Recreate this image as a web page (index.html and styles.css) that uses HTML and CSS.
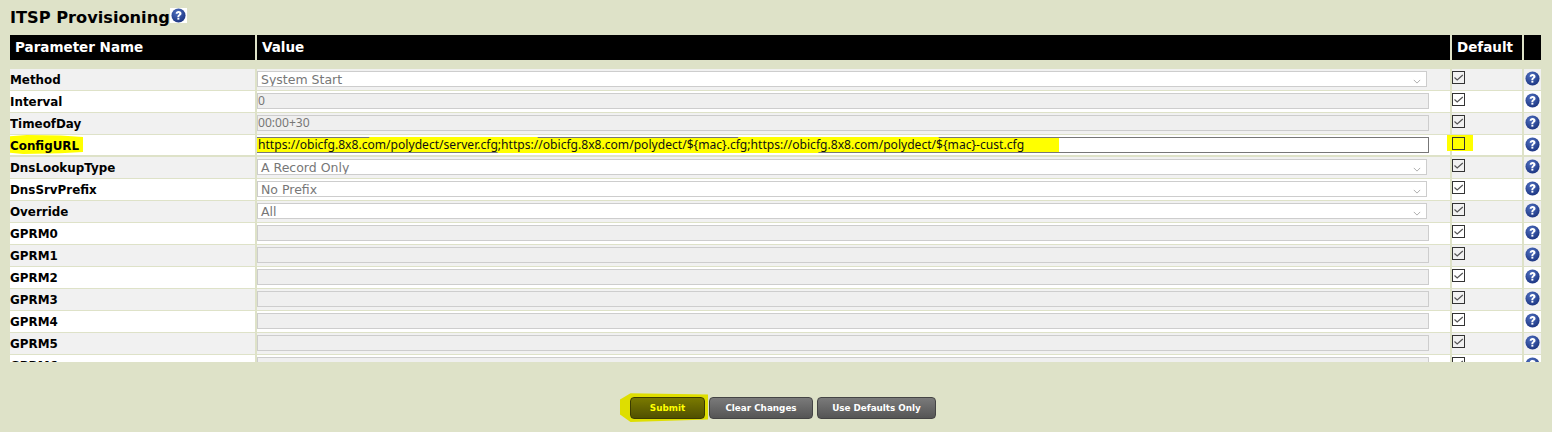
FILE: index.html
```html
<!DOCTYPE html>
<html lang="en">
<head>
<meta charset="utf-8">
<title>ITSP Provisioning</title>
<link rel="stylesheet" href="styles.css">
</head>
<body>
<svg class="defs" width="0" height="0" aria-hidden="true">
  <defs>
    <radialGradient id="hg" cx="40%" cy="30%" r="75%">
      <stop offset="0" stop-color="#4f70c0"/>
      <stop offset="1" stop-color="#1a337f"/>
    </radialGradient>
    <symbol id="help" viewBox="0 0 16 16">
      <circle cx="8" cy="8" r="7.5" fill="url(#hg)"/>
      <path d="M5 6.100C5.100 4.300 6.400 3.300 8.100 3.300c1.900 0 3.100 1 3.100 2.500 0 1.100-.6 1.700-1.400 2.300-.7.5-.9.8-.9 1.600H6.800c0-1.300.3-1.900 1.100-2.500.6-.4.9-.7.9-1.200 0-.5-.3-.8-.8-.8-.6 0-.9.4-1 1z" fill="#fff"/>
      <rect x="6.800" y="10.300" width="2.100" height="2.100" fill="#fff"/>
    </symbol>
    <symbol id="check" viewBox="0 0 13 13">
      <path d="M2.500 6.500 5.200 9 10.800 4" fill="none" stroke="#555" stroke-width="1.200"/>
    </symbol>
  </defs>
</svg>
<h1 class="title"><span class="title-text">ITSP Provisioning</span><span class="title-help"><svg class="help"><use href="#help"/></svg></span></h1>

<div class="grid head">
  <div>Parameter Name</div>
  <div>Value</div>
  <div>Default</div>
  <div></div>
</div>

<div class="clip">
  <div class="grid row alt"><div class="name">Method</div><div class="val"><div class="field sel">System Start<svg class="chev" viewBox="0 0 10 6"><path d="M1 1l4 4 4-4" fill="none" stroke="#999"/></svg></div></div><div class="def"><span class="cb"><svg><use href="#check"/></svg></span></div><div class="hlp"><svg class="help"><use href="#help"/></svg></div></div>
  <div class="grid row"><div class="name">Interval</div><div class="val"><div class="field">0</div></div><div class="def"><span class="cb"><svg><use href="#check"/></svg></span></div><div class="hlp"><svg class="help"><use href="#help"/></svg></div></div>
  <div class="grid row alt"><div class="name">TimeofDay</div><div class="val"><div class="field">00:00+30</div></div><div class="def"><span class="cb"><svg><use href="#check"/></svg></span></div><div class="hlp"><svg class="help"><use href="#help"/></svg></div></div>
  <div class="grid row"><div class="name"><span class="mark-label">ConfigURL</span></div><div class="val"><div class="field live"><span class="mark-url">https://obicfg.8x8.com/polydect/server.cfg;https://obicfg.8x8.com/polydect/${mac}.cfg;https://obicfg.8x8.com/polydect/${mac}-cust.cfg</span></div></div><div class="def"><span class="mark-cb"></span><span class="cb"></span></div><div class="hlp"><svg class="help"><use href="#help"/></svg></div></div>
  <div class="grid row alt"><div class="name">DnsLookupType</div><div class="val"><div class="field sel">A Record Only<svg class="chev" viewBox="0 0 10 6"><path d="M1 1l4 4 4-4" fill="none" stroke="#999"/></svg></div></div><div class="def"><span class="cb"><svg><use href="#check"/></svg></span></div><div class="hlp"><svg class="help"><use href="#help"/></svg></div></div>
  <div class="grid row"><div class="name">DnsSrvPrefix</div><div class="val"><div class="field sel">No Prefix<svg class="chev" viewBox="0 0 10 6"><path d="M1 1l4 4 4-4" fill="none" stroke="#999"/></svg></div></div><div class="def"><span class="cb"><svg><use href="#check"/></svg></span></div><div class="hlp"><svg class="help"><use href="#help"/></svg></div></div>
  <div class="grid row alt"><div class="name">Override</div><div class="val"><div class="field sel">All<svg class="chev" viewBox="0 0 10 6"><path d="M1 1l4 4 4-4" fill="none" stroke="#999"/></svg></div></div><div class="def"><span class="cb"><svg><use href="#check"/></svg></span></div><div class="hlp"><svg class="help"><use href="#help"/></svg></div></div>
  <div class="grid row"><div class="name">GPRM0</div><div class="val"><div class="field"></div></div><div class="def"><span class="cb"><svg><use href="#check"/></svg></span></div><div class="hlp"><svg class="help"><use href="#help"/></svg></div></div>
  <div class="grid row alt"><div class="name">GPRM1</div><div class="val"><div class="field"></div></div><div class="def"><span class="cb"><svg><use href="#check"/></svg></span></div><div class="hlp"><svg class="help"><use href="#help"/></svg></div></div>
  <div class="grid row"><div class="name">GPRM2</div><div class="val"><div class="field"></div></div><div class="def"><span class="cb"><svg><use href="#check"/></svg></span></div><div class="hlp"><svg class="help"><use href="#help"/></svg></div></div>
  <div class="grid row alt"><div class="name">GPRM3</div><div class="val"><div class="field"></div></div><div class="def"><span class="cb"><svg><use href="#check"/></svg></span></div><div class="hlp"><svg class="help"><use href="#help"/></svg></div></div>
  <div class="grid row"><div class="name">GPRM4</div><div class="val"><div class="field"></div></div><div class="def"><span class="cb"><svg><use href="#check"/></svg></span></div><div class="hlp"><svg class="help"><use href="#help"/></svg></div></div>
  <div class="grid row alt"><div class="name">GPRM5</div><div class="val"><div class="field"></div></div><div class="def"><span class="cb"><svg><use href="#check"/></svg></span></div><div class="hlp"><svg class="help"><use href="#help"/></svg></div></div>
  <div class="grid row"><div class="name">GPRM6</div><div class="val"><div class="field"></div></div><div class="def"><span class="cb"><svg><use href="#check"/></svg></span></div><div class="hlp"><svg class="help"><use href="#help"/></svg></div></div>
</div>

<div class="actions">
  <span class="mark-btn"><button class="btn submit" type="button">Submit</button></span>
  <button class="btn clear" type="button">Clear Changes</button>
  <button class="btn defaults" type="button">Use Defaults Only</button>
</div>
</body>
</html>
```
FILE: styles.css
```css
* { box-sizing: border-box; }
html, body { height: 432px; overflow: hidden; }
body {
  margin: 0;
  padding: 8px 11px 0 10px;
  background: #dee2c8;
  font-family: "DejaVu Sans", Verdana, sans-serif;
  color: #000;
}
.defs { position: absolute; }
.title {
  margin: 0;
  height: 27px;
  display: flex;
  align-items: flex-start;
  font-size: 16.2px;
  line-height: 19px;
  font-weight: 700;
}
.title-text { width: 160px; white-space: nowrap; }
.title-help {
  width: 17px;
  height: 15px;
  background: #fff;
  display: flex;
  align-items: center;
  justify-content: center;
}
.help { width: 15px; height: 15px; display: block; }
.grid {
  display: grid;
  grid-template-columns: 245px 1193px 70px 17px;
  column-gap: 2px;
  width: 1531px;
}
.head {
  height: 25px;
  margin-bottom: 9px;
}
.head > div {
  background: #000;
  color: #fff;
  font-size: 13.5px;
  font-weight: 700;
  line-height: 25px;
  padding-left: 5px;
}
.clip {
  height: 293px;
  overflow: hidden;
}
.row {
  height: 20px;
  margin-bottom: 2px;
}
.row > div { background: #fff; min-width: 0; }
.row.alt > div { background: #f1f1f1; }
.row > .name {
  padding-top: 1px;
  font-size: 11.9px;
  font-weight: 700;
  line-height: 20px;
  white-space: nowrap;
}
.mark-label {
  display: block;
  width: 75px;
  height: 19px;
  margin: -1px 0 0 -2px;
  padding: 1px 0 0 2px;
  background: #ffff00;
  clip-path: polygon(0 8%, 25% 0, 70% 3%, 100% 10%, 100% 90%, 70% 96%, 20% 100%, 0 92%);
}
.val { padding-top: 2px; }
.field {
  width: 1172px;
  height: 16px;
  border: 1px solid #cdcdcd;
  background: #efefef;
  color: #777;
  font-family: "Noto Sans", "DejaVu Sans", sans-serif;
  font-size: 12.1px;
  line-height: 14px;
  white-space: nowrap;
  overflow: hidden;
}
.sel {
  position: relative;
  width: 1170px;
  background: #fff;
  padding-left: 3px;
  font-family: "DejaVu Sans", Verdana, sans-serif;
  font-size: 12.5px;
  line-height: 15px;
}
.chev {
  position: absolute;
  right: 5px;
  top: 7px;
  width: 8px;
  height: 5px;
}
.live {
  background: #fff;
  border: 1px solid #777;
  color: #111;
  overflow: visible;
  line-height: 16px;
}
.mark-url {
  display: block;
  width: 802px;
  height: 16px;
  margin: -1px 0 0 -1px;
  padding-left: 1px;
  background: #ffff00;
  clip-path: polygon(0 6%, 14% 6%, 14% 0, 35% 0, 35% 6%, 60% 6%, 60% 0, 85% 0, 85% 6%, 100% 6%, 100% 94%, 70% 94%, 70% 100%, 30% 100%, 30% 94%, 0 94%);
}
.def { position: relative; padding-top: 2px; }
.cb {
  position: relative;
  display: block;
  width: 13px;
  height: 13px;
  border: 1px solid #333;
}
.cb svg {
  position: absolute;
  left: -1px;
  top: -1px;
  width: 13px;
  height: 13px;
}
.mark-cb {
  position: absolute;
  left: -5px;
  top: 0;
  width: 26px;
  height: 16px;
  background: #ffff00;
}
.hlp {
  padding: 2px 0 0 1px;
}
.actions {
  display: flex;
  justify-content: center;
  gap: 4px;
  margin-top: 35px;
  width: 1531px;
  padding-left: 15px;
}
.btn {
  height: 22px;
  padding: 0;
  border: 1px solid #444;
  border-radius: 4px;
  background: linear-gradient(#7a7a7a, #555);
  color: #fff;
  font-family: "DejaVu Sans", Verdana, sans-serif;
  font-size: 8.8px;
  font-weight: 700;
}
.clear { width: 104px; }
.defaults { width: 119px; }
.submit {
  width: 75px;
  background: linear-gradient(#7a7a00, #505000);
  color: #ffff00;
  border-color: #3c3c00;
  display: block;
}
.mark-btn {
  display: block;
  background: #dede00;
  margin: -5px -3px -3px -10px;
  padding: 5px 3px 3px 10px;
  clip-path: polygon(0 25%, 12% 4%, 100% 8%, 100% 92%, 12% 100%, 0 75%);
}
```
